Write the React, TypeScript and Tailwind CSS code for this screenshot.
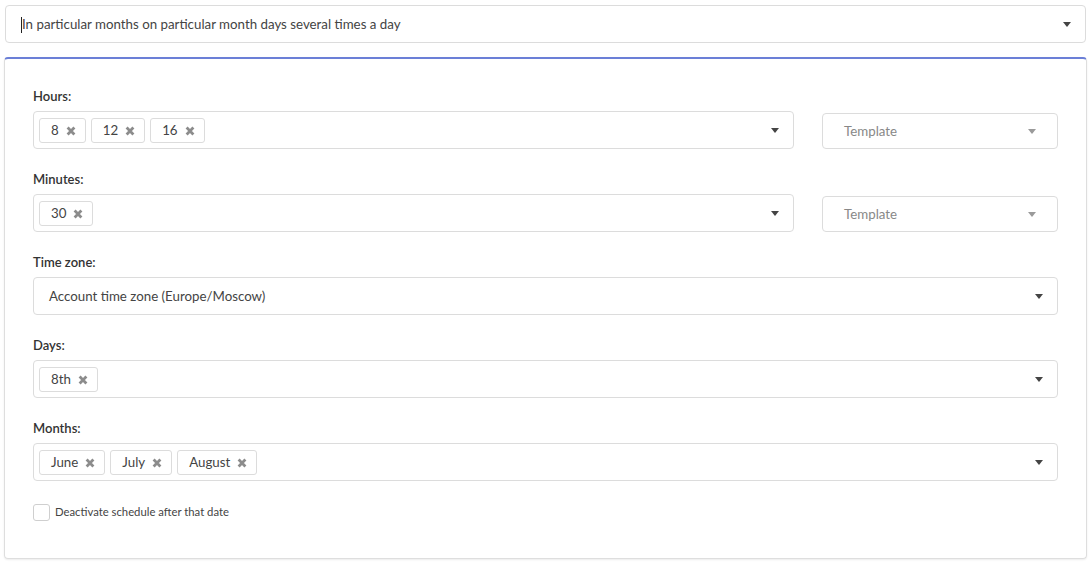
import React from "react"

const FONT = "font-['Lato','Liberation_Sans',sans-serif]"

function Caret({ light }: { light?: boolean }) {
  return (
    <svg width="8" height="5" viewBox="0 0 8 5" className="shrink-0">
      <path d="M0 0h8L4 5z" fill={light ? "#9a9a9a" : "#444"} />
    </svg>
  )
}

function Cross() {
  return (
    <svg width="10" height="10" viewBox="0 0 10 10" className="shrink-0">
      <path d="M1.6 1.6l6.8 6.8M8.4 1.6L1.6 8.4" stroke="#8c8c8c" strokeWidth="2.8" strokeLinecap="butt" />
    </svg>
  )
}

function Chip({ label }: { label: string }) {
  return (
    <span className="flex h-[25px] items-center gap-[7px] rounded-[3px] border border-[#dcdcdc] pl-[11px] pr-[9px] pt-px text-[13.3px] text-[#444]">
      {label}
      <Cross />
    </span>
  )
}

function Field({ label, children }: { label: string; children: React.ReactNode }) {
  return (
    <div className="flex flex-col">
      <div className="mb-[7px] h-[16px] text-[13px] leading-[16px] font-semibold text-[#333]">{label}</div>
      {children}
    </div>
  )
}

function MultiSelect({ values, grow }: { values: string[]; grow?: boolean }) {
  return (
    <div
      className={`flex h-[38px] items-center rounded-[4px] border border-[#dcdcdc] pl-[5px] pr-[14px] ${grow ? "flex-1" : ""}`}
    >
      <div className="flex flex-1 gap-[5px]">
        {values.map((v) => (
          <Chip key={v} label={v} />
        ))}
      </div>
      <Caret />
    </div>
  )
}

function Template() {
  return (
    <div className="flex h-[36px] w-[236px] items-center justify-between rounded-[4px] border border-[#dcdcdc] pl-[21px] pr-[21px] pt-px text-[13.3px] text-[#888]">
      Template
      <Caret light />
    </div>
  )
}

export default function App() {
  return (
    <div className={`${FONT} min-h-screen bg-white px-[4px] pt-[5px] text-[#333]`}>
      <div className="mx-[1px] flex h-[38px] items-center rounded-[4px] border border-[#dcdcdc] pl-[15px] pr-[14px] pt-px text-[13.3px] text-[#444]">
        <span className="h-[16px] w-px bg-[#222]" />
        <span className="flex-1">In particular months on particular month days several times a day</span>
        <Caret />
      </div>

      <div className="mt-[14px] flex flex-col gap-[22px] rounded-[4px] border border-t-2 border-[#dedede] border-t-[#6b7fd7] px-[28px] pb-[37px] pt-[29px] shadow-[0_1px_2px_rgba(0,0,0,0.08)]">
        <Field label="Hours:">
          <div className="flex items-end gap-[28px]">
            <MultiSelect values={["8", "12", "16"]} grow />
            <Template />
          </div>
        </Field>
        <Field label="Minutes:">
          <div className="flex items-end gap-[28px]">
            <MultiSelect values={["30"]} grow />
            <Template />
          </div>
        </Field>
        <Field label="Time zone:">
          <div className="flex h-[38px] items-center rounded-[4px] border border-[#dcdcdc] pl-[15px] pr-[14px] pt-px text-[13.3px] text-[#444]">
            <span className="flex-1">Account time zone (Europe/Moscow)</span>
            <Caret />
          </div>
        </Field>
        <Field label="Days:">
          <MultiSelect values={["8th"]} />
        </Field>
        <Field label="Months:">
          <MultiSelect values={["June", "July", "August"]} />
        </Field>
        <label className="flex items-center gap-[5px] pt-px text-[11.3px] text-[#444]">
          <span className="h-[17px] w-[17px] rounded-[3px] border border-[#cfcfcf] bg-white" />
          Deactivate schedule after that date
        </label>
      </div>
    </div>
  )
}
